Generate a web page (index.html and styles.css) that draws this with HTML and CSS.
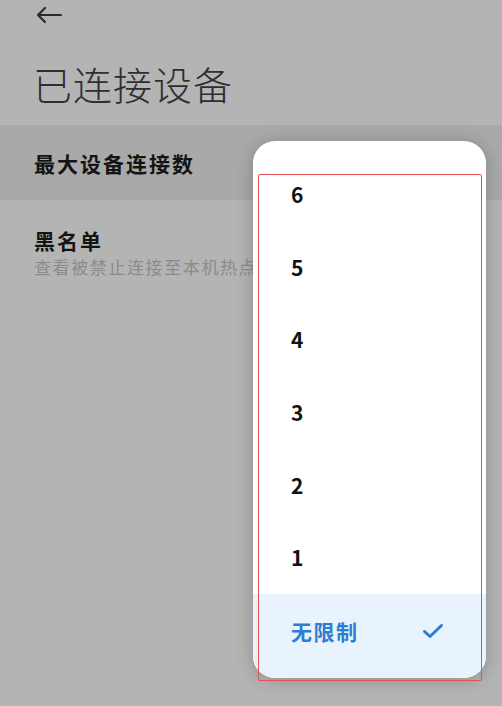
FILE: index.html
```html
<!DOCTYPE html>
<html lang="zh-CN">
<head>
<meta charset="utf-8">
<title>已连接设备</title>
<link rel="stylesheet" href="styles.css">
</head>
<body>
<div class="page">
  <div class="topbar">
    <svg class="back" width="28" height="20" viewBox="0 0 28 20"><path d="M26 10H3M10 3L3 10L10 17" fill="none" stroke="#2b2b2b" stroke-width="2.2" stroke-linecap="round" stroke-linejoin="round"/></svg>
  </div>
  <h1 class="title">已连接设备</h1>
  <div class="row row-active">
    <div class="row-title">最大设备连接数</div>
  </div>
  <div class="row row-two">
    <div class="row-title">黑名单</div>
    <div class="row-sub">查看被禁止连接至本机热点</div>
  </div>

  <div class="popup">
    <div class="item">6</div>
    <div class="item">5</div>
    <div class="item">4</div>
    <div class="item">3</div>
    <div class="item">2</div>
    <div class="item">1</div>
    <div class="item item-selected">
      <span>无限制</span>
      <svg class="check" width="22" height="16" viewBox="0 0 22 16"><path d="M2.5 8.5L8 13.5L19.5 2.5" fill="none" stroke="#2d7dd2" stroke-width="3" stroke-linecap="round" stroke-linejoin="round"/></svg>
    </div>
  </div>
  <div class="annot"></div>
</div>
</body>
</html>
```

FILE: styles.css
```css
html, body {
  margin: 0;
  padding: 0;
}
body {
  background: #b4b4b4;
  font-family: "Noto Sans CJK SC", "Noto Sans", sans-serif;
  width: 502px;
  height: 706px;
  overflow: hidden;
}
.page {
  position: relative;
  width: 502px;
  height: 706px;
}
.topbar {
  height: 28px;
  display: flex;
  align-items: center;
  padding-left: 35px;
}
.back {
  display: block;
  margin-top: 2px;
}
.title {
  margin: 0;
  padding: 30px 0 0 33px;
  height: 67px;
  font-size: 39px;
  line-height: 50px;
  font-weight: 300;
  color: #2e2e2e;
  letter-spacing: 1px;
}
.row {
  padding-left: 34px;
}
.row-active {
  background: #a9a9a9;
  height: 75px;
  display: flex;
  align-items: center;
}
.row-title {
  font-size: 21px;
  line-height: 28px;
  font-weight: 700;
  color: #141414;
  letter-spacing: 2px;
}
.row-two {
  padding-top: 26px;
  white-space: nowrap;
}
.row-sub {
  font-size: 17px;
  line-height: 24px;
  color: #8b8b8b;
  letter-spacing: 1.6px;
  margin-top: 1px;
}
.popup {
  position: absolute;
  left: 253px;
  top: 141px;
  width: 233px;
  height: 537px;
  background: #ffffff;
  border-radius: 22px;
  box-shadow: 0 2px 18px rgba(0, 0, 0, 0.22);
  overflow: hidden;
  padding-top: 17px;
  box-sizing: border-box;
  display: flex;
  flex-direction: column;
}
.item {
  height: 72.6px;
  flex: none;
  display: flex;
  align-items: center;
  padding-left: 38px;
  font-size: 21px;
  font-weight: 700;
  color: #111111;
}
.item-selected {
  flex: 1;
  height: auto;
  background: #e9f3fd;
  color: #2d7dd2;
  padding-bottom: 10px;
  justify-content: space-between;
  padding-right: 42px;
  letter-spacing: 1.5px;
  font-weight: 700;
}
.check {
  display: block;
}
.annot {
  position: absolute;
  left: 258px;
  top: 174px;
  width: 224px;
  height: 507px;
  box-sizing: border-box;
  border: 1.5px solid #e2534f;
  border-radius: 2px;
}
```
